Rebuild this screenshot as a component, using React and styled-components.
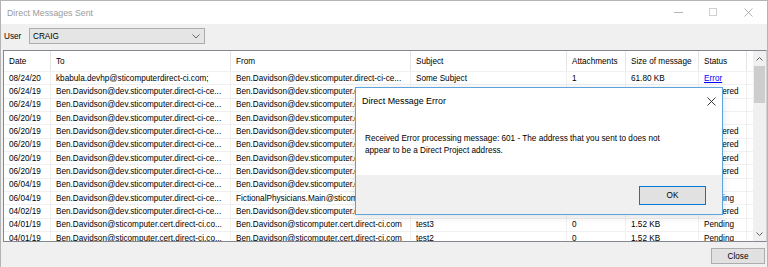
import React from "react";
import styled, { createGlobalStyle } from "styled-components";

const GlobalStyle = createGlobalStyle`
  html, body {
    margin: 0;
    padding: 0;
    background: #ffffff;
  }
  body {
    font-family: "Liberation Sans", Arial, sans-serif;
    font-size: 8.2px;
    color: #000;
  }
  * {
    box-sizing: border-box;
  }
`;

const COLS = "47px 180px 180px 156px 59px 73px 48px";

const headers = ["Date", "To", "From", "Subject", "Attachments", "Size of message", "Status"];

const devAddr = "Ben.Davidson@dev.sticomputer.direct-ci-ce...";
const certTo = "Ben.Davidson@sticomputer.cert.direct-ci.co...";
const certFrom = "Ben.Davidson@sticomputer.cert.direct-ci.com";

const rows = [
  ["08/24/20", "kbabula.devhp@sticomputerdirect-ci.com;", devAddr, "Some Subject", "1", "61.80 KB", "Error"],
  ["06/24/19", devAddr, devAddr, "test", "0", "1.52 KB", "Delivered"],
  ["06/24/19", devAddr, devAddr, "test", "0", "1.52 KB", "Error"],
  ["06/20/19", devAddr, devAddr, "test", "0", "1.52 KB", "Error"],
  ["06/20/19", devAddr, devAddr, "test", "0", "1.52 KB", "Delivered"],
  ["06/20/19", devAddr, devAddr, "test", "0", "1.52 KB", "Delivered"],
  ["06/20/19", devAddr, devAddr, "test", "0", "1.52 KB", "Delivered"],
  ["06/20/19", devAddr, devAddr, "test", "0", "1.52 KB", "Delivered"],
  ["06/04/19", devAddr, devAddr, "test", "0", "1.52 KB", "Error"],
  ["06/04/19", devAddr, "FictionalPhysicians.Main@sticomputer.dire...", "test", "0", "1.52 KB", "Pending"],
  ["04/02/19", devAddr, devAddr, "test", "0", "1.52 KB", "Delivered"],
  ["04/01/19", certTo, certFrom, "test3", "0", "1.52 KB", "Pending"],
  ["04/01/19", certTo, certFrom, "test2", "0", "1.52 KB", "Pending"],
];

export default function App() {
  return (
    <>
      <GlobalStyle />
      <Window>
        <TitleBar>
          <TitleText>Direct Messages Sent</TitleText>
          <Controls>
            <CtrlButton>
              <svg width="9" height="9" viewBox="0 0 9 9">
                <line x1="0" y1="4.5" x2="9" y2="4.5" stroke="#b4b4b4" strokeWidth="1" />
              </svg>
            </CtrlButton>
            <CtrlButton>
              <svg width="9" height="9" viewBox="0 0 9 9">
                <rect x="0.5" y="0.5" width="7" height="7" fill="none" stroke="#cfcfcf" strokeWidth="1" />
              </svg>
            </CtrlButton>
            <CtrlButton>
              <svg width="9" height="9" viewBox="0 0 9 9">
                <path d="M0.5 0.5 L8.5 8.5 M8.5 0.5 L0.5 8.5" stroke="#a8a8a8" strokeWidth="0.9" />
              </svg>
            </CtrlButton>
          </Controls>
        </TitleBar>

        <Toolbar>
          <Label>User</Label>
          <Combo>
            <span>CRAIG</span>
            <svg width="8" height="5" viewBox="0 0 8 5">
              <polyline points="0.5,0.5 4,4 7.5,0.5" fill="none" stroke="#555" strokeWidth="0.9" />
            </svg>
          </Combo>
        </Toolbar>

        <GridBox>
          <Table>
            <HeaderRow>
              {headers.map((h) => (
                <HeaderCell key={h}>{h}</HeaderCell>
              ))}
            </HeaderRow>
            {rows.map((r, i) => (
              <Row key={i}>
                {r.map((c, j) =>
                  j === 6 && c === "Error" ? (
                    <Cell key={j}>
                      <Link>{c}</Link>
                    </Cell>
                  ) : (
                    <Cell key={j}>{c}</Cell>
                  )
                )}
              </Row>
            ))}
          </Table>
          <ScrollBar>
            <ScrollArrow>
              <svg width="7" height="4" viewBox="0 0 7 4">
                <polyline points="0.5,3.5 3.5,0.5 6.5,3.5" fill="none" stroke="#606060" strokeWidth="1" />
              </svg>
            </ScrollArrow>
            <Track>
              <Thumb />
            </Track>
            <ScrollArrow>
              <svg width="7" height="4" viewBox="0 0 7 4">
                <polyline points="0.5,0.5 3.5,3.5 6.5,0.5" fill="none" stroke="#606060" strokeWidth="1" />
              </svg>
            </ScrollArrow>
          </ScrollBar>
        </GridBox>

        <Footer>
          <Button>Close</Button>
        </Footer>

        <Dialog>
          <DialogTitle>
            <span>Direct Message Error</span>
            <svg width="9" height="9" viewBox="0 0 9 9">
              <path d="M0.5 0.5 L8.5 8.5 M8.5 0.5 L0.5 8.5" stroke="#222" strokeWidth="0.9" />
            </svg>
          </DialogTitle>
          <DialogBody>
            Received Error processing message: 601 - The address that you sent to does not
            <br />
            appear to be a Direct Project address.
          </DialogBody>
          <DialogFooter>
            <OkButton>OK</OkButton>
          </DialogFooter>
        </Dialog>
      </Window>
    </>
  );
}

const Window = styled.div`
  position: relative;
  width: 768px;
  height: 267px;
  border: 1px solid #b4b4b4;
  border-bottom: none;
  background: #f0f0f0;
  display: flex;
  flex-direction: column;
`;

const TitleBar = styled.div`
  height: 23px;
  background: #ffffff;
  display: flex;
  align-items: center;
  justify-content: space-between;
  padding-left: 6px;
`;

const TitleText = styled.span`
  font-size: 8.8px;
  color: #9a9a9a;
`;

const Controls = styled.div`
  display: flex;
  height: 100%;
  padding-right: 1px;
`;

const CtrlButton = styled.div`
  width: 35px;
  height: 100%;
  display: flex;
  align-items: center;
  justify-content: center;
`;

const Toolbar = styled.div`
  display: flex;
  align-items: center;
  padding: 4px 0 0 3px;
  height: 20px;
  margin-bottom: 6px;
`;

const Label = styled.span`
  width: 25px;
`;

const Combo = styled.div`
  width: 176px;
  height: 16px;
  border: 1px solid #adadad;
  background: #e5e5e5;
  display: flex;
  align-items: center;
  justify-content: space-between;
  padding: 0 4px 0 3px;
`;

const GridBox = styled.div`
  margin-left: 2px;
  height: 192px;
  border: 1px solid #828790;
  border-right: 1px solid #d0d0d0;
  background: #ffffff;
  display: flex;
`;

const Table = styled.div`
  flex: 1;
  overflow: hidden;
`;

const HeaderRow = styled.div`
  display: grid;
  grid-template-columns: ${COLS};
  height: 20px;
  align-items: center;
`;

const HeaderCell = styled.div`
  height: 100%;
  display: flex;
  align-items: center;
  padding-left: 5px;
  border-right: 1px solid #e5e5e5;
  white-space: nowrap;
  overflow: hidden;
`;

const Row = styled.div`
  display: grid;
  grid-template-columns: ${COLS};
  height: 13.333px;
  border-top: 1px solid #f0f0f0;
`;

const Cell = styled.div`
  display: flex;
  align-items: center;
  padding-left: 5px;
  border-right: 1px solid #f0f0f0;
  white-space: nowrap;
  overflow: hidden;
`;

const Link = styled.span`
  color: #0000ff;
  text-decoration: underline;
`;

const ScrollBar = styled.div`
  width: 13px;
  background: #f0f0f0;
  display: flex;
  flex-direction: column;
`;

const ScrollArrow = styled.div`
  height: 15px;
  display: flex;
  align-items: center;
  justify-content: center;
`;

const Track = styled.div`
  flex: 1;
  padding: 0 1px;
`;

const Thumb = styled.div`
  height: 37px;
  background: #cdcdcd;
`;

const Footer = styled.div`
  flex: 1;
  display: flex;
  justify-content: flex-end;
  align-items: flex-start;
  padding: 6px 2px 0 0;
`;

const Button = styled.div`
  width: 54px;
  height: 16px;
  border: 1px solid #adadad;
  background: #e1e1e1;
  display: flex;
  align-items: center;
  justify-content: center;
`;

const Dialog = styled.div`
  position: absolute;
  left: 354px;
  top: 86px;
  width: 368px;
  height: 128px;
  border: 1px solid #5fa3dc;
  background: #ffffff;
  display: flex;
  flex-direction: column;
  box-shadow: 0 2px 8px rgba(0, 0, 0, 0.12);
`;

const DialogTitle = styled.div`
  height: 26px;
  display: flex;
  align-items: center;
  justify-content: space-between;
  padding: 0 6px 0 6px;
  font-size: 8.9px;
`;

const DialogBody = styled.div`
  flex: 1;
  display: flex;
  flex-direction: column;
  justify-content: center;
  padding-left: 9px;
  line-height: 12px;
  display: block;
  padding-top: 19px;
`;

const DialogFooter = styled.div`
  height: 39px;
  background: #f0f0f0;
  display: flex;
  justify-content: flex-end;
  align-items: flex-start;
  padding: 11px 16px 0 0;
`;

const OkButton = styled.div`
  width: 67px;
  height: 19px;
  border: 1px solid #0078d7;
  background: #e1e1e1;
  display: flex;
  align-items: center;
  justify-content: center;
`;
